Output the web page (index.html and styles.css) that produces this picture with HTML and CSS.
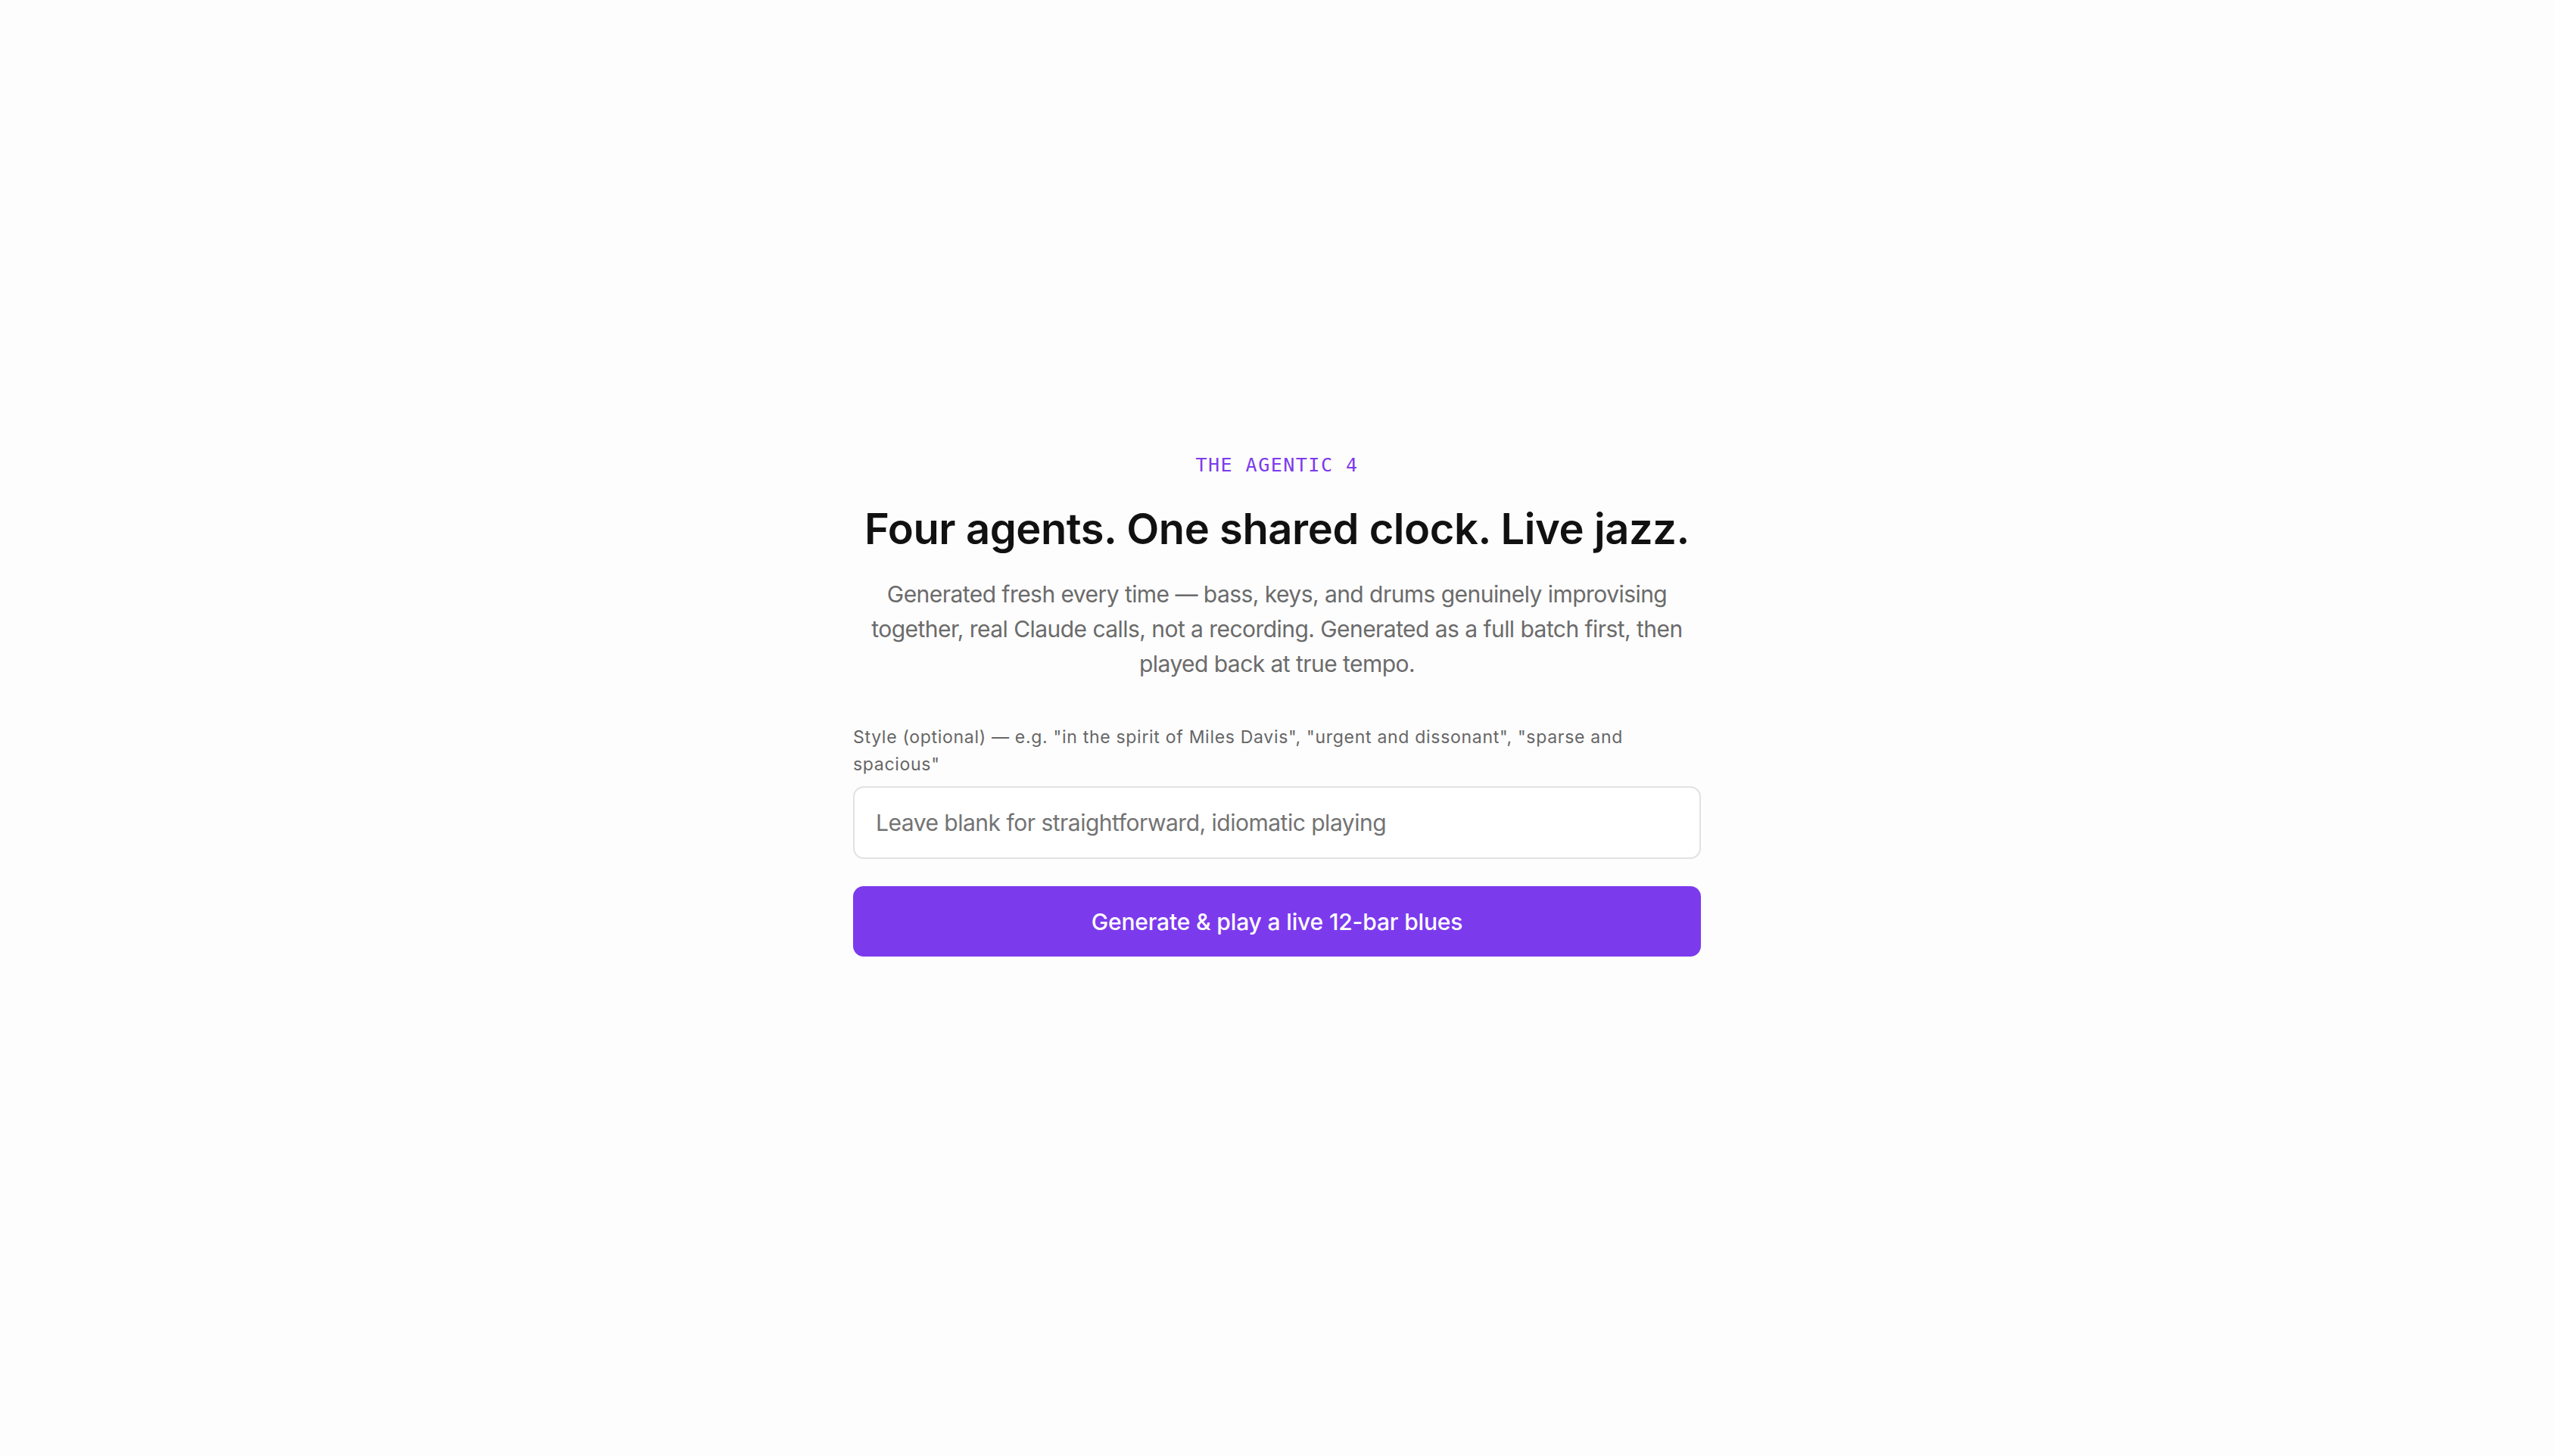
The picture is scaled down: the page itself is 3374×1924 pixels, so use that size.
FILE: index.html
```
<!DOCTYPE html>
<html lang="en">
<head>
<meta charset="utf-8">
<title>The Agentic 4</title>
<link rel="stylesheet" href="styles.css">
</head>
<body>
<main class="page">
  <section class="hero">
    <div class="eyebrow">THE AGENTIC 4</div>
    <h1 class="title">Four agents. One shared clock. Live jazz.</h1>
    <p class="lede">Generated fresh every time — bass, keys, and drums genuinely improvising together, real Claude calls, not a recording. Generated as a full batch first, then played back at true tempo.</p>
    <form class="form">
      <label class="label" for="style">Style (optional) — e.g. "in the spirit of Miles Davis", "urgent and dissonant", "sparse and spacious"</label>
      <input class="input" id="style" type="text" placeholder="Leave blank for straightforward, idiomatic playing">
      <button class="button" type="button">Generate &amp; play a live 12-bar blues</button>
    </form>
  </section>
</main>
</body>
</html>
```
FILE: styles.css
```
* { box-sizing: border-box; }
html, body { margin: 0; padding: 0; }
body {
  background: #fdfdfd;
  font-family: Inter, "Noto Sans", "Liberation Sans", sans-serif;
  color: #111;
  min-height: 1924px;
}
.page {
  display: flex;
  justify-content: center;
  padding-top: 597px;
}
.hero {
  width: 1120px;
  display: flex;
  flex-direction: column;
  align-items: center;
  text-align: center;
}
.eyebrow {
  font-family: "DejaVu Sans Mono", "Liberation Mono", monospace;
  font-size: 25px;
  line-height: 36px;
  letter-spacing: 1.5px;
  color: #7c3aed;
}
.title {
  margin: 32px 0 0;
  font-size: 56px;
  line-height: 68px;
  font-weight: 600;
  letter-spacing: -0.4px;
  color: #111;
}
.lede {
  margin: 29px 0 0;
  font-size: 30px;
  line-height: 46px;
  letter-spacing: -0.55px;
  color: #6b6b6b;
}
.form {
  width: 100%;
  margin-top: 56px;
  display: flex;
  flex-direction: column;
  text-align: left;
}
.label {
  font-size: 23px;
  line-height: 36px;
  letter-spacing: 0.7px;
  color: #666;
}
.input {
  margin-top: 11px;
  height: 96px;
  padding: 0 28px;
  border: 2px solid #e2e2e2;
  border-radius: 14px;
  background: #fff;
  font-family: inherit;
  font-size: 30px;
  letter-spacing: -0.5px;
  color: #111;
  outline: none;
}
.input::placeholder { color: #737373; }
.button {
  margin-top: 36px;
  height: 93px;
  border: 0;
  border-radius: 14px;
  background: #7c3aed;
  color: #fff;
  font-family: inherit;
  font-size: 30px;
  font-weight: 500;
  letter-spacing: -0.15px;
  cursor: pointer;
}
```
